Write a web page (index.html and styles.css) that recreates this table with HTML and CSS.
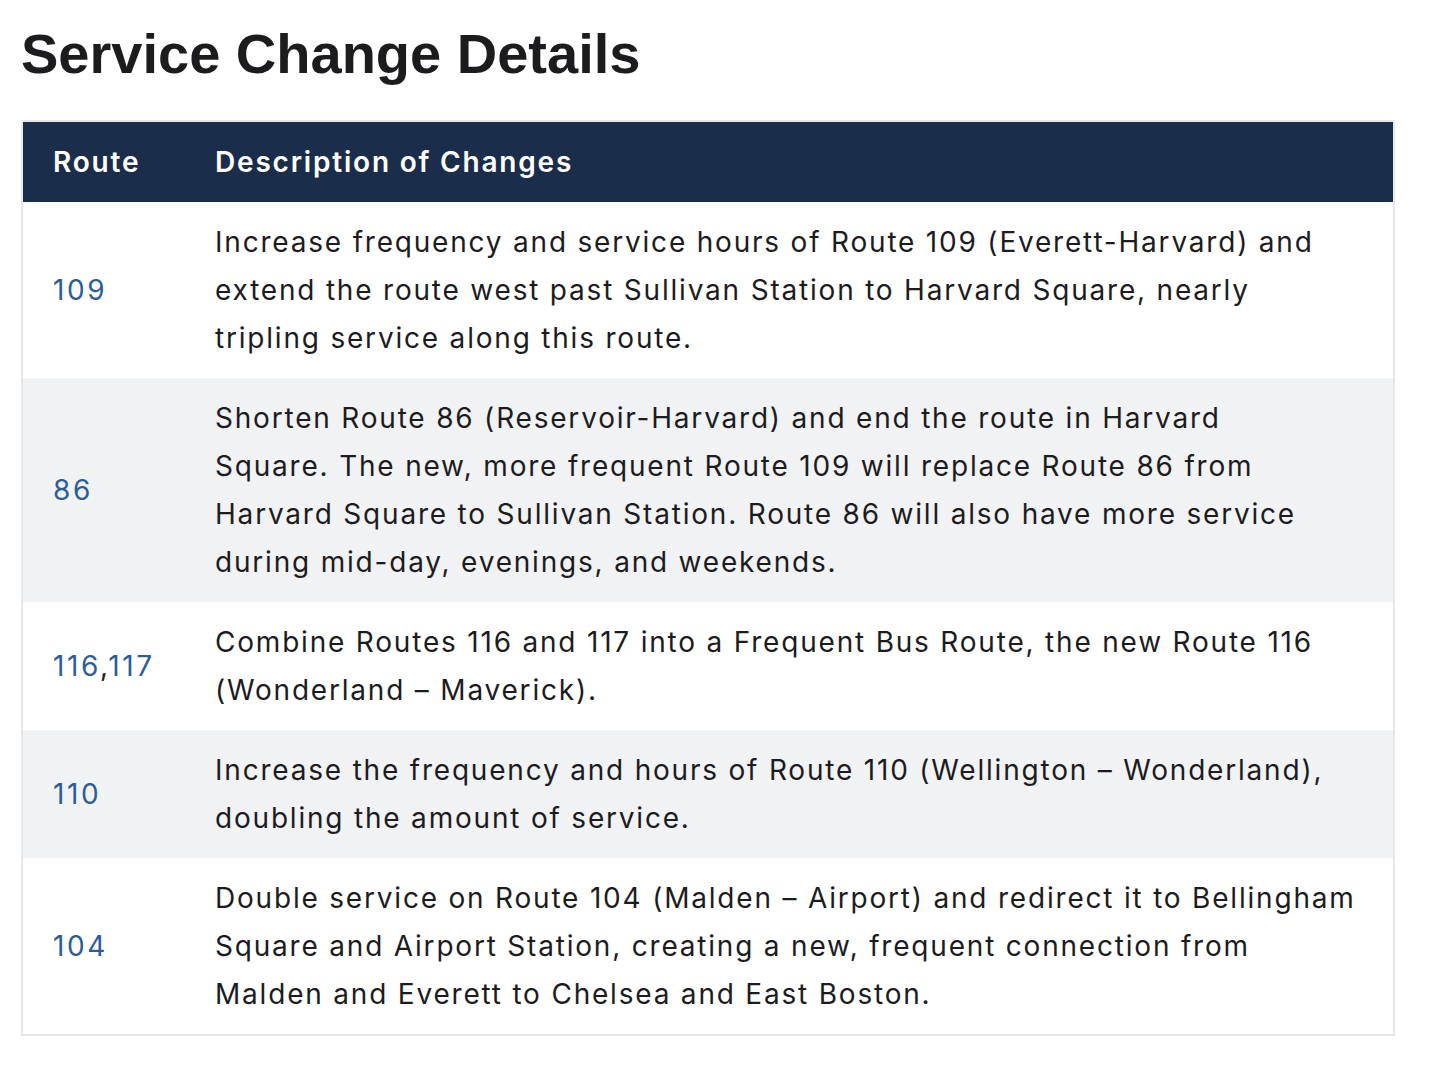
FILE: index.html
```html
<!DOCTYPE html>
<html>
<head>
<meta charset="utf-8">
<link rel="stylesheet" href="styles.css">
</head>
<body>
<main class="page">
  <h1 class="title">Service Change Details</h1>
  <table class="changes">
    <thead>
      <tr><th class="col-route">Route</th><th>Description of Changes</th></tr>
    </thead>
    <tbody>
      <tr>
        <td class="route"><a href="#">109</a></td>
        <td>Increase frequency and service hours of Route 109 (Everett-Harvard) and extend the route west past Sullivan Station to Harvard Square, nearly tripling service along this route.</td>
      </tr>
      <tr>
        <td class="route"><a href="#">86</a></td>
        <td>Shorten Route 86 (Reservoir-Harvard) and end the route in Harvard Square.&nbsp;The new, more frequent Route 109 will replace Route 86 from Harvard Square to Sullivan Station. Route 86 will also have more service during mid-day, evenings, and weekends.</td>
      </tr>
      <tr>
        <td class="route"><a href="#">116</a>,<a href="#">117</a></td>
        <td>Combine Routes 116 and 117 into a Frequent Bus Route, the new Route 116 (Wonderland – Maverick).</td>
      </tr>
      <tr>
        <td class="route"><a href="#">110</a></td>
        <td>Increase the frequency and hours of Route 110 (Wellington – Wonderland), doubling the amount of service.</td>
      </tr>
      <tr>
        <td class="route"><a href="#">104</a></td>
        <td>Double service on Route 104 (Malden – Airport) and redirect it to Bellingham Square and Airport Station, creating a new, frequent connection from Malden and Everett to Chelsea and East Boston.</td>
      </tr>
    </tbody>
  </table>
</main>
</body>
</html>
```
FILE: styles.css
```css
* { box-sizing: border-box; }
html, body { margin: 0; padding: 0; background: #fff; }
body {
  font-family: Inter, "Noto Sans", sans-serif;
  color: #1c1c1f;
}
.page {
  padding: 20px 21px;
}
.title {
  font-family: "Liberation Sans", Arial, sans-serif;
  font-weight: 700;
  font-size: 56px;
  line-height: 68px;
  margin: 0 0 32px 0;
  color: #1c1c1f;
}
.changes {
  width: 1374px;
  table-layout: fixed;
  border-collapse: collapse;
  border: 2px solid #e6e7ea;
  font-size: 28px;
  line-height: 48px;
  letter-spacing: 1.8px;
}
.changes th {
  background: #1a2d4a;
  color: #fff;
  text-align: left;
  font-family: Inter, "Noto Sans", sans-serif;
  font-weight: 600;
  font-size: 28px;
  padding: 16px 30px;
}
.changes td {
  padding: 16px 30px;
  vertical-align: middle;
  text-align: left;
}
.changes .col-route { width: 163px; }
.changes tbody tr:nth-child(even) td { background: #f1f2f4; }
.route { letter-spacing: 2.6px; }
.route a {
  color: #2b5d9a;
  text-decoration: none;
}
```
